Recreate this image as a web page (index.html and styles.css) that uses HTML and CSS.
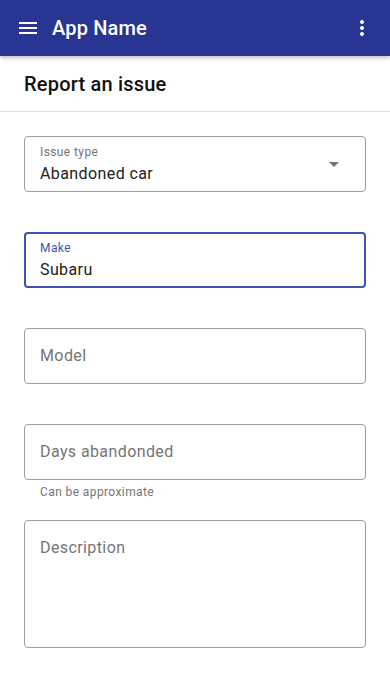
FILE: index.html
```html
<!DOCTYPE html>
<html lang="en">
<head>
    <meta charset="UTF-8">
    <meta name="viewport" content="width=device-width, initial-scale=1.0">
    <title>App Name</title>
    <link rel="stylesheet" href="styles.css">
</head>
<body>

    <header class="app-bar">
        <button class="icon-button" aria-label="Menu">
            <svg width="24" height="24" viewBox="0 0 24 24"><path fill="#fff" d="M3 18h18v-2H3v2zm0-5h18v-2H3v2zm0-7v2h18V6H3z"/></svg>
        </button>
        <div class="app-title">App Name</div>
        <button class="icon-button" aria-label="More">
            <svg width="24" height="24" viewBox="0 0 24 24"><path fill="#fff" d="M12 8c1.1 0 2-.9 2-2s-.9-2-2-2-2 .9-2 2 .9 2 2 2zm0 2c-1.1 0-2 .9-2 2s.9 2 2 2 2-.9 2-2-.9-2-2-2zm0 6c-1.1 0-2 .9-2 2s.9 2 2 2 2-.9 2-2-.9-2-2-2z"/></svg>
        </button>
    </header>

    <div class="subheader">Report an issue</div>

    <form class="form">
        <div class="field-group">
            <div class="field select">
                <div class="field-body">
                    <div class="field-label">Issue type</div>
                    <div class="field-value">Abandoned car</div>
                </div>
                <span class="arrow"></span>
            </div>
        </div>

        <div class="field-group">
            <div class="field focused">
                <div class="field-body">
                    <div class="field-label">Make</div>
                    <div class="field-value">Subaru</div>
                </div>
            </div>
        </div>

        <div class="field-group">
            <div class="field">
                <div class="placeholder">Model</div>
            </div>
        </div>

        <div class="field-group with-hint">
            <div class="field">
                <div class="placeholder">Days abandonded</div>
            </div>
            <div class="hint">Can be approximate</div>
        </div>

        <div class="field-group">
            <div class="field textarea">
                <div class="placeholder">Description</div>
            </div>
        </div>
    </form>

</body>
</html>
```

FILE: styles.css
```css
body {
    font-family: Roboto, 'Noto Sans', sans-serif;
    margin: 0;
    background-color: #fff;
    color: #212121;
}

.app-bar {
    display: flex;
    align-items: center;
    height: 56px;
    padding: 0 16px;
    background-color: #283593;
    color: #fff;
    box-shadow: 0 2px 4px rgba(0, 0, 0, 0.25);
    position: relative;
}

.icon-button {
    display: flex;
    padding: 0;
    border: none;
    background: none;
    width: 24px;
    height: 24px;
}

.app-title {
    flex: 1;
    margin-left: 12px;
    font-size: 20px;
    font-weight: 500;
    letter-spacing: 0.15px;
}

.subheader {
    height: 55px;
    padding: 0 24px;
    display: flex;
    align-items: center;
    font-size: 20px;
    font-weight: 500;
    letter-spacing: 0.2px;
    color: #111;
    border-bottom: 1px solid #e0e0e0;
}

.form {
    padding: 24px 24px 0;
}

.field-group {
    margin-bottom: 40px;
}

.field-group.with-hint {
    margin-bottom: 20px;
}

.field {
    display: flex;
    align-items: center;
    height: 56px;
    box-sizing: border-box;
    padding: 0 15px;
    border: 1px solid #9e9e9e;
    border-radius: 4px;
}

.field.focused {
    border: 2px solid #3f51b5;
    padding: 0 14px;
}

.field.focused .field-label {
    color: #3f51b5;
}

.field-body {
    flex: 1;
    padding-top: 2px;
}

.field-label {
    font-size: 12px;
    line-height: 16px;
    color: #757575;
    letter-spacing: 0.4px;
}

.field-value {
    margin-top: 2px;
    font-size: 16px;
    line-height: 24px;
    color: #212121;
    letter-spacing: 0.4px;
}

.placeholder {
    font-size: 16px;
    line-height: 24px;
    color: #757575;
    letter-spacing: 0.4px;
}

.arrow {
    width: 0;
    height: 0;
    margin-right: 11px;
    border-left: 5px solid transparent;
    border-right: 5px solid transparent;
    border-top: 5px solid #757575;
}

.field.textarea {
    height: 128px;
    align-items: flex-start;
    padding-top: 15px;
}

.hint {
    margin-top: 4px;
    padding-left: 16px;
    font-size: 12px;
    line-height: 16px;
    color: #757575;
    letter-spacing: 0.4px;
}
```
